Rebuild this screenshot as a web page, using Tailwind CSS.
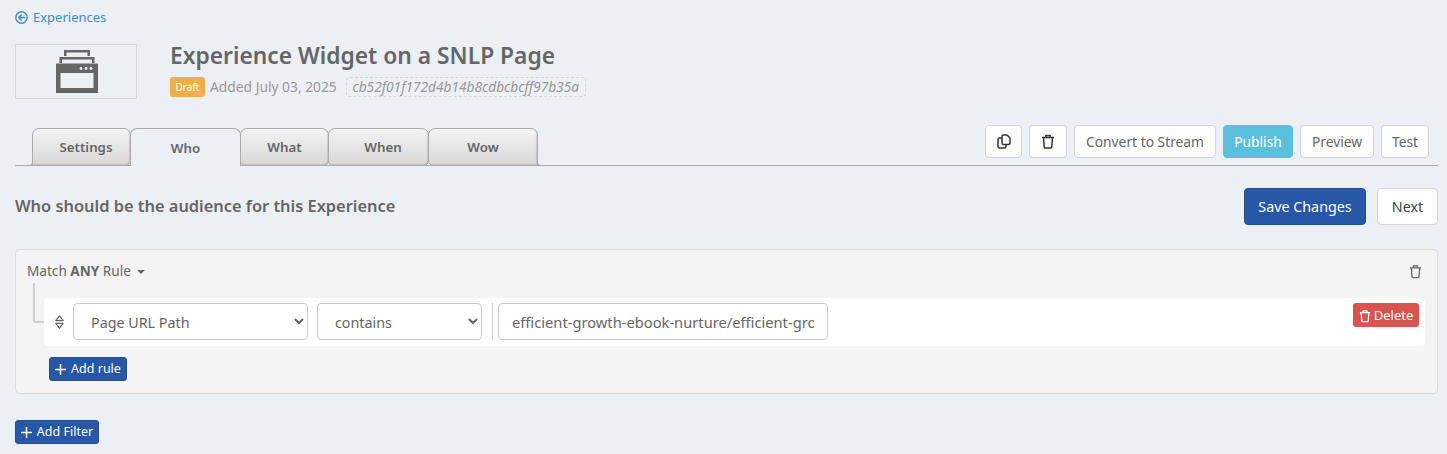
<!DOCTYPE html>
<html lang="en">
<head>
  <meta charset="UTF-8" />
  <meta name="viewport" content="width=device-width, initial-scale=1.0" />
  <title>Experience Widget on a SNLP Page</title>
  <script src="https://cdn.jsdelivr.net/npm/@tailwindcss/browser@4"></script>
</head>
<body class="bg-[#eceff4] h-[454px] overflow-hidden text-[#666] font-['Noto_Sans','Open_Sans',sans-serif]">
  <div class="pl-[15px] pr-[9px]">

    <!-- back link -->
    <a href="#" class="flex items-center gap-[5px] h-[35px] text-[13px] text-[#3f8fbf]">
      <svg class="w-[13px] h-[13px]" viewBox="0 0 16 16" fill="none" stroke="currentColor" stroke-width="1.700" stroke-linecap="round" stroke-linejoin="round">
        <circle cx="8" cy="8" r="7" />
        <path d="M11.800 8H5M7.800 4.800 4.600 8l3.200 3.200" />
      </svg>
      Experiences
    </a>

    <!-- header -->
    <div class="flex mt-[9px] h-[55px]">
      <div class="w-[122px] h-[55px] border border-[#d6d6d6] flex items-center justify-center">
        <svg class="ml-[2px] w-[42px] h-[44px]" viewBox="0 0 42 44" fill="#666">
          <path d="M8 0h26v6h-2.500V2.500h-21V6H8z" />
          <path d="M3.500 7h35v6h-2.500V9.500H6V13H3.500z" />
          <path fill-rule="evenodd" d="M0 13.500h42V43H0zM4.500 23v15h33V23z" />
          <circle cx="25" cy="18.500" r="1.400" fill="#eceff4" />
          <circle cx="30" cy="18.500" r="1.400" fill="#eceff4" />
          <circle cx="35" cy="18.500" r="1.400" fill="#eceff4" />
        </svg>
      </div>
      <div class="ml-[33px]">
        <h1 class="text-[22.800px] leading-[26px] font-semibold text-[#666] -mt-px">Experience Widget on a SNLP Page</h1>
        <div class="flex items-center mt-[8px]">
          <span class="h-[20px] w-[35px] flex items-center justify-center rounded-[3px] bg-[#f0ad4e] text-white text-[10px]">Draft</span>
          <span class="ml-[5px] text-[13.800px] text-[#999]">Added July 03, 2025</span>
          <span class="ml-[9px] h-[20px] w-[240px] flex items-center justify-center border border-dashed border-[#d6d6d6] rounded-[4px] text-[13.700px] italic text-[#999]">cb52f01f172d4b14b8cdbcbcff97b35a</span>
        </div>
      </div>
    </div>

    <!-- tabs + actions -->
    <div class="flex items-start justify-between h-[41px] mt-[26px] border-b border-[#aaa]">
      <div class="flex ml-[17px] mt-[3px] h-[38px] text-[13.300px] font-semibold">
        <div class="relative w-[99px] h-[38px] pt-[2px] pl-[9px] flex items-center justify-center border border-[#aaa] rounded-t-[7px] rounded-br-[5px] bg-gradient-to-b from-[#f3f3f3] to-[#d8d8d8] shadow-[inset_-1px_-1px_1px_rgba(0,0,0,0.12)]">
          Settings
          <span class="absolute -left-[4px] -bottom-px w-[4px] h-[4px] border-r border-b border-[#aaa] rounded-br-[4px] bg-[#eceff4]"></span>
        </div>
        <div class="w-[111px] h-[38px] pt-[2px] flex items-center justify-center border border-[#aaa] border-b-0 rounded-t-[7px] bg-[#eceff4] -ml-px">Who</div>
        <div class="w-[89px] h-[38px] pt-[2px] flex items-center justify-center border border-[#aaa] rounded-t-[7px] rounded-b-[5px] bg-gradient-to-b from-[#f3f3f3] to-[#d8d8d8] shadow-[inset_-1px_-1px_1px_rgba(0,0,0,0.12)] -ml-px">What</div>
        <div class="w-[101px] h-[38px] pt-[2px] pl-[9px] flex items-center justify-center border border-[#aaa] rounded-t-[7px] rounded-b-[5px] bg-gradient-to-b from-[#f3f3f3] to-[#d8d8d8] shadow-[inset_-1px_-1px_1px_rgba(0,0,0,0.12)] -ml-px">When</div>
        <div class="relative w-[110px] h-[38px] pt-[2px] flex items-center justify-center border border-[#aaa] rounded-t-[7px] rounded-bl-[5px] bg-gradient-to-b from-[#f3f3f3] to-[#d8d8d8] shadow-[inset_-1px_-1px_1px_rgba(0,0,0,0.12)] -ml-px">
          Wow
          <span class="absolute -right-[4px] -bottom-px w-[4px] h-[4px] border-l border-b border-[#aaa] rounded-bl-[4px] bg-[#eceff4]"></span>
        </div>
      </div>
      <div class="flex gap-[7px] mr-[9px] text-[13.800px]">
        <button class="w-[37px] h-[33px] bg-white border border-[#d4d4d4] rounded-[4px] flex items-center justify-center text-[#333]">
          <svg class="w-[14px] h-[15px]" viewBox="0 0 14 15" fill="none" stroke="currentColor" stroke-width="1.500" stroke-linejoin="round">
            <path d="M5 2.500A1.500 1.500 0 0 1 6.500 1H10l3 3v5a1.500 1.500 0 0 1-1.500 1.500h-5A1.500 1.500 0 0 1 5 9z" />
            <path d="M5 4H2.500A1.500 1.500 0 0 0 1 5.500v7A1.500 1.500 0 0 0 2.500 14h5A1.500 1.500 0 0 0 9 12.500v-2" />
          </svg>
        </button>
        <button class="w-[38px] h-[33px] bg-white border border-[#d4d4d4] rounded-[4px] flex items-center justify-center text-[#333]">
          <svg class="w-[14px] h-[15px]" viewBox="0 0 14 15" fill="none" stroke="currentColor" stroke-width="1.500" stroke-linejoin="round">
            <path d="M1 3.500h12M4.800 3.500V1.500h4.400v2M2.500 3.500l.7 9.500a1 1 0 0 0 1 1h5.600a1 1 0 0 0 1-1l.7-9.500" />
          </svg>
        </button>
        <button class="w-[142px] h-[33px] pt-px bg-white border border-[#d4d4d4] rounded-[4px] text-[#666]">Convert to Stream</button>
        <button class="w-[70px] h-[33px] pt-px bg-[#5bc0de] border border-[#5bc0de] rounded-[4px] text-white">Publish</button>
        <button class="w-[74px] h-[33px] pt-px bg-white border border-[#d4d4d4] rounded-[4px] text-[#666]">Preview</button>
        <button class="w-[48px] h-[33px] pt-px bg-white border border-[#d4d4d4] rounded-[4px] text-[#666]">Test</button>
      </div>
    </div>

    <!-- section title -->
    <div class="flex items-center justify-between mt-[22px] h-[37px]">
      <h2 class="text-[16.400px] font-semibold text-[#666]">Who should be the audience for this Experience</h2>
      <div class="flex gap-[11px] text-[14.300px]">
        <button class="w-[122px] h-[37px] pt-px bg-[#2757a6] border border-[#24508f] rounded-[4px] text-white">Save Changes</button>
        <button class="w-[61px] h-[37px] pt-px bg-white border border-[#d4d4d4] rounded-[4px] text-[#444]">Next</button>
      </div>
    </div>

    <!-- rule group -->
    <div class="relative mt-[24px] h-[145px] bg-[#f4f4f4] border border-[#dcdcdc] rounded-[5px] pt-[11px] pl-[11px] pr-[12px]">
      <div class="flex items-center justify-between h-[21px] pr-[3px]">
        <div class="flex items-center text-[13.600px] text-[#666]">
          <span>Match <b class="font-bold">ANY</b> Rule</span>
          <span class="ml-[6px] mt-px w-0 h-0 border-x-[4px] border-x-transparent border-t-[4px] border-t-[#666]"></span>
        </div>
        <svg class="w-[13px] h-[15px] text-[#666]" viewBox="0 0 14 15" fill="none" stroke="currentColor" stroke-width="1.400" stroke-linejoin="round">
          <path d="M1 3.500h12M4.800 3.500V1.500h4.400v2M2.500 3.500l.7 9.500a1 1 0 0 0 1 1h5.600a1 1 0 0 0 1-1l.7-9.500" />
        </svg>
      </div>

      <!-- connector between the group and its rule -->
      <div class="absolute left-[17px] top-[33px] w-[11px] h-[40px] border-l-2 border-b-2 border-[#ccc] rounded-bl-[3px]"></div>

      <div class="relative flex items-start justify-between ml-[17px] mt-[16px] h-[48px] bg-white rounded-[4px] pt-[5px] pr-[6px]">
        <div class="flex items-center">
          <svg class="ml-[10px] w-[11px] h-[14px] text-[#666]" viewBox="0 0 11 15" fill="none" stroke="currentColor" stroke-width="1.300" stroke-linejoin="round">
            <path d="M5.500 1 9.500 6h-8zM5.500 14 9.500 9h-8z" />
          </svg>
          <select class="ml-[8px] w-[235px] h-[37px] pl-[13px] pt-[2px] bg-white border border-[#ccc] rounded-[4px] text-[14.300px] text-[#666]">
            <option>Page URL Path</option>
          </select>
          <select class="ml-[9px] w-[165px] h-[37px] pl-[13px] pt-[2px] bg-white border border-[#ccc] rounded-[4px] text-[14.300px] text-[#666]">
            <option>contains</option>
          </select>
          <span class="ml-[10px] w-px h-[37px] bg-[#ccc]"></span>
          <input readonly value="efficient-growth-ebook-nurture/efficient-growth" class="ml-[5px] w-[330px] h-[37px] px-[13px] pt-px bg-white border border-[#ccc] rounded-[4px] text-[14.700px] text-[#666]" />
        </div>
        <button class="w-[66px] h-[24px] pt-px flex items-center justify-center gap-[3px] bg-[#d9534f] rounded-[3px] text-white text-[13px]">
          <svg class="w-[12px] h-[14px]" viewBox="0 0 14 15" fill="none" stroke="currentColor" stroke-width="1.500" stroke-linejoin="round">
            <path d="M1 3.500h12M4.800 3.500V1.500h4.400v2M2.500 3.500l.7 9.500a1 1 0 0 0 1 1h5.600a1 1 0 0 0 1-1l.7-9.500" />
          </svg>
          Delete
        </button>
      </div>

      <button class="ml-[22px] mt-[11px] w-[78px] h-[24px] pt-px flex items-center justify-center gap-[5px] bg-[#2757a6] border border-[#24508f] rounded-[3px] text-white text-[12.500px]">
        <svg class="w-[11px] h-[11px]" viewBox="0 0 11 11" stroke="currentColor" stroke-width="1.500"><path d="M5.500 0v11M0 5.500h11" /></svg>
        Add rule
      </button>
    </div>

    <button class="mt-[26px] w-[84px] h-[24px] pt-px flex items-center justify-center gap-[5px] bg-[#2757a6] border border-[#24508f] rounded-[3px] text-white text-[12.500px]">
      <svg class="w-[11px] h-[11px]" viewBox="0 0 11 11" stroke="currentColor" stroke-width="1.500"><path d="M5.500 0v11M0 5.500h11" /></svg>
      Add Filter
    </button>
  </div>
</body>
</html>
